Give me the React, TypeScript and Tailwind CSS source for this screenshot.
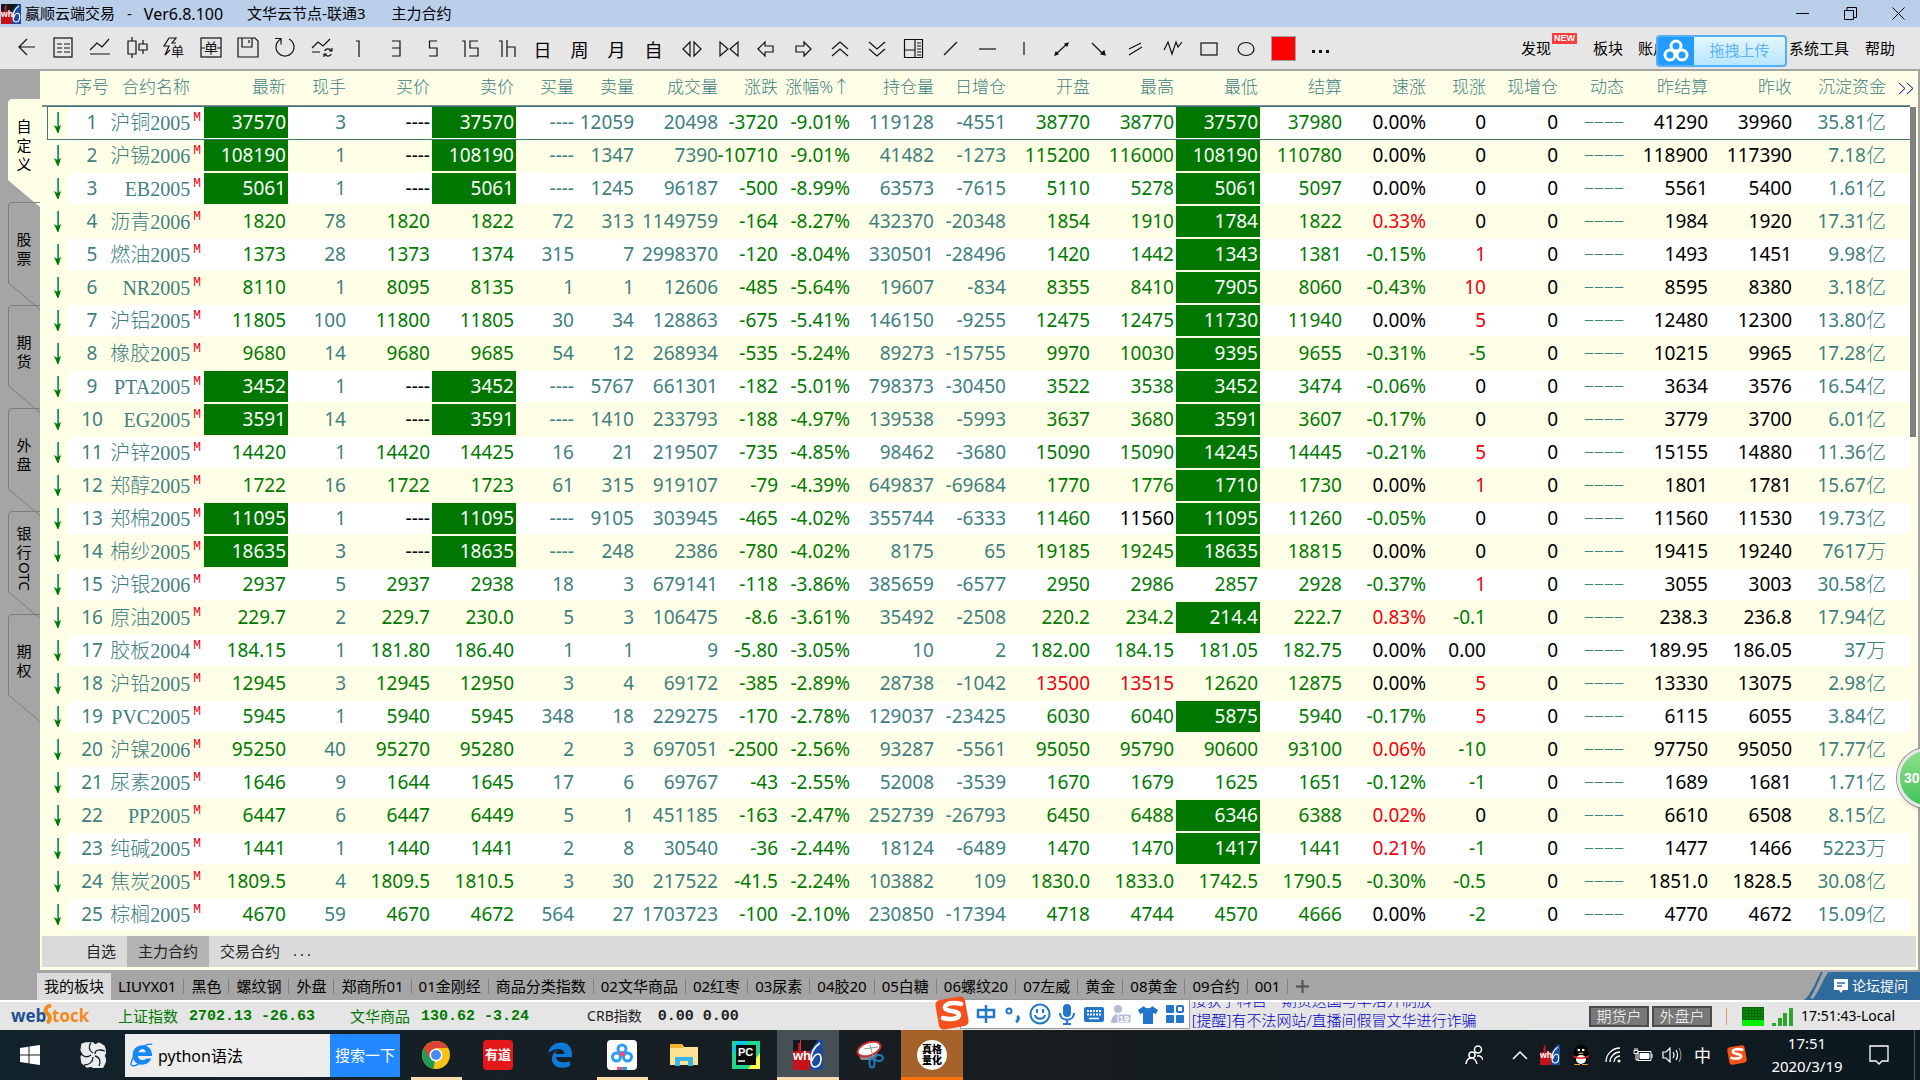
import React from "react";

type Row = {
  cells: string[];
  limit?: boolean;
  low?: boolean;
};

// name last vol bid ask bidVol askVol volume change pct oi dOi open high low settle speed tick prevSettle prevClose capital
const RAW = `
L沪铜2005 37570 3 ---- 37570 ---- 12059 20498 -3720 -9.01% 119128 -4551 38770 38770 37570 37980 0.00% 0 41290 39960 35.81亿
L沪锡2006 108190 1 ---- 108190 ---- 1347 7390 -10710 -9.01% 41482 -1273 115200 116000 108190 110780 0.00% 0 118900 117390 7.18亿
LEB2005 5061 1 ---- 5061 ---- 1245 96187 -500 -8.99% 63573 -7615 5110 5278 5061 5097 0.00% 0 5561 5400 1.61亿
*沥青2006 1820 78 1820 1822 72 313 1149759 -164 -8.27% 432370 -20348 1854 1910 1784 1822 0.33% 0 1984 1920 17.31亿
*燃油2005 1373 28 1373 1374 315 7 2998370 -120 -8.04% 330501 -28496 1420 1442 1343 1381 -0.15% 1 1493 1451 9.98亿
*NR2005 8110 1 8095 8135 1 1 12606 -485 -5.64% 19607 -834 8355 8410 7905 8060 -0.43% 10 8595 8380 3.18亿
*沪铝2005 11805 100 11800 11805 30 34 128863 -675 -5.41% 146150 -9255 12475 12475 11730 11940 0.00% 5 12480 12300 13.80亿
*橡胶2005 9680 14 9680 9685 54 12 268934 -535 -5.24% 89273 -15755 9970 10030 9395 9655 -0.31% -5 10215 9965 17.28亿
LPTA2005 3452 1 ---- 3452 ---- 5767 661301 -182 -5.01% 798373 -30450 3522 3538 3452 3474 -0.06% 0 3634 3576 16.54亿
LEG2005 3591 14 ---- 3591 ---- 1410 233793 -188 -4.97% 139538 -5993 3637 3680 3591 3607 -0.17% 0 3779 3700 6.01亿
*沪锌2005 14420 1 14420 14425 16 21 219507 -735 -4.85% 98462 -3680 15090 15090 14245 14445 -0.21% 5 15155 14880 11.36亿
*郑醇2005 1722 16 1722 1723 61 315 919107 -79 -4.39% 649837 -69684 1770 1776 1710 1730 0.00% 1 1801 1781 15.67亿
L郑棉2005 11095 1 ---- 11095 ---- 9105 303945 -465 -4.02% 355744 -6333 11460 11560 11095 11260 -0.05% 0 11560 11530 19.73亿
L棉纱2005 18635 3 ---- 18635 ---- 248 2386 -780 -4.02% 8175 65 19185 19245 18635 18815 0.00% 0 19415 19240 7617万
.沪银2006 2937 5 2937 2938 18 3 679141 -118 -3.86% 385659 -6577 2950 2986 2857 2928 -0.37% 1 3055 3003 30.58亿
*原油2005 229.7 2 229.7 230.0 5 3 106475 -8.6 -3.61% 35492 -2508 220.2 234.2 214.4 222.7 0.83% -0.1 238.3 236.8 17.94亿
.胶板2004 184.15 1 181.80 186.40 1 1 9 -5.80 -3.05% 10 2 182.00 184.15 181.05 182.75 0.00% 0.00 189.95 186.05 37万
.沪铅2005 12945 3 12945 12950 3 4 69172 -385 -2.89% 28738 -1042 13500 13515 12620 12875 0.00% 5 13330 13075 2.98亿
*PVC2005 5945 1 5940 5945 348 18 229275 -170 -2.78% 129037 -23425 6030 6040 5875 5940 -0.17% 5 6115 6055 3.84亿
.沪镍2006 95250 40 95270 95280 2 3 697051 -2500 -2.56% 93287 -5561 95050 95790 90600 93100 0.06% -10 97750 95050 17.77亿
.尿素2005 1646 9 1644 1645 17 6 69767 -43 -2.55% 52008 -3539 1670 1679 1625 1651 -0.12% -1 1689 1681 1.71亿
*PP2005 6447 6 6447 6449 5 1 451185 -163 -2.47% 252739 -26793 6450 6488 6346 6388 0.02% 0 6610 6508 8.15亿
*纯碱2005 1441 1 1440 1441 2 8 30540 -36 -2.44% 18124 -6489 1470 1470 1417 1441 0.21% -1 1477 1466 5223万
.焦炭2005 1809.5 4 1809.5 1810.5 3 30 217522 -41.5 -2.24% 103882 109 1830.0 1833.0 1742.5 1790.5 -0.30% -0.5 1851.0 1828.5 30.08亿
.棕榈2005 4670 59 4670 4672 564 27 1703723 -100 -2.10% 230850 -17394 4718 4744 4570 4666 0.00% -2 4770 4672 15.09亿
`;

// Leading mark of each line: L = limit down, * = new low of the day, . = neither
const ROWS: Row[] = RAW.trim()
  .split("\n")
  .map((line) => ({
    cells: line.slice(1).split(" "),
    limit: line[0] === "L",
    low: line[0] !== ".",
  }));

const TEAL = "text-[#408080]";
const GREEN = "text-[#007a00]";
const RED = "text-[#f00010]";
const FILL = "bg-[#007800] text-white";
const SONG = "font-['Liberation_Serif','Noto_Sans_CJK_SC',serif]";

function toneOf(value: string, base: number) {
  const n = parseFloat(value);
  if (Number.isNaN(n) || n === base) return "text-black";
  return n > base ? RED : GREEN;
}

function Num({ children, tone }: { children: React.ReactNode; tone: string }) {
  return (
    <td className={`border-b-2 border-[#ffffe8] p-0 ${tone}`}>
      <div className="flex h-[31px] items-center justify-end pr-0.5 leading-none whitespace-nowrap">{children}</div>
    </td>
  );
}

function QuoteRow({ row, index }: { row: Row; index: number }) {
  const c = row.cells;
  const prev = parseFloat(c[18]);
  const strong = row.limit ? FILL : GREEN;
  const capital = c[20];
  return (
    <tr className={index % 2 === 0 ? "bg-white" : "bg-[#ffffe8]"}>
      <td className="border-b-2 border-[#ffffe8] bg-[#ffffe8] p-0">
        <svg className="ml-3 block h-[21px] w-[7px]" viewBox="0 0 7 21" aria-hidden="true">
          <path d="M3 0h1v16H3z" fill="#2fb0b8" />
          <path d="M4 0h1v16H4z" fill="#2f8a3a" />
          <path d="M0 13l3.500 2L7 13 4.500 21h-1z" fill="#007a00" />
        </svg>
      </td>
      <td className={`border-b-2 border-[#ffffe8] p-0 text-center leading-none ${TEAL}`}>{index + 1}</td>
      <td className="border-b-2 border-[#ffffe8] p-0">
        <div className="flex h-[31px] justify-end gap-[3px] pr-[3px] leading-none whitespace-nowrap">
          <span className={`flex items-center text-[20px] font-light ${SONG} ${TEAL}`}>{c[0]}</span>
          <span className="pt-1 font-['Liberation_Mono',monospace] text-[13px] text-[#f00010]">M</span>
        </div>
      </td>
      <Num tone={strong}>{c[1]}</Num>
      <Num tone={TEAL}>{c[2]}</Num>
      <Num tone={row.limit ? "text-black" : GREEN}>{c[3]}</Num>
      <Num tone={strong}>{c[4]}</Num>
      <Num tone={TEAL}>{c[5]}</Num>
      <Num tone={TEAL}>{c[6]}</Num>
      <Num tone={TEAL}>{c[7]}</Num>
      <Num tone={GREEN}>{c[8]}</Num>
      <Num tone={GREEN}>{c[9]}</Num>
      <Num tone={TEAL}>{c[10]}</Num>
      <Num tone={TEAL}>{c[11]}</Num>
      <Num tone={toneOf(c[12], prev)}>{c[12]}</Num>
      <Num tone={toneOf(c[13], prev)}>{c[13]}</Num>
      <Num tone={row.low ? FILL : GREEN}>{c[14]}</Num>
      <Num tone={GREEN}>{c[15]}</Num>
      <Num tone={toneOf(c[16], 0)}>{c[16]}</Num>
      <Num tone={toneOf(c[17], 0)}>{c[17]}</Num>
      <Num tone="text-black">0</Num>
      <Num tone={TEAL}>
        <span className="pb-1 text-[20px] font-light">––––</span>
      </Num>
      <Num tone="text-black">{c[18]}</Num>
      <Num tone="text-black">{c[19]}</Num>
      <Num tone={TEAL}>
        {capital.slice(0, -1)}
        <span className="text-[20px] font-light">{capital.slice(-1)}</span>
      </Num>
      <td className="border-b-2 border-[#ffffe8] p-0" />
    </tr>
  );
}

const HEADERS = ["最新", "现手", "买价", "卖价", "买量", "卖量", "成交量", "涨跌", "涨幅%↑", "持仓量", "日增仓", "开盘", "最高", "最低", "结算", "速涨", "现涨", "现增仓", "动态", "昨结算", "昨收", "沉淀资金"];

function QuoteTable() {
  return (
    <table className="w-full table-fixed border-separate border-spacing-0 text-[19px]">
      <colgroup>
        <col className="w-[26px]" />
        <col className="w-[48px]" />
        <col className="w-[88px]" />
        <col className="w-[84px]" />
        <col className="w-[60px]" />
        <col className="w-[84px]" />
        <col className="w-[84px]" />
        <col className="w-[60px]" />
        <col className="w-[60px]" />
        <col className="w-[84px]" />
        <col className="w-[60px]" />
        <col className="w-[72px]" />
        <col className="w-[84px]" />
        <col className="w-[72px]" />
        <col className="w-[84px]" />
        <col className="w-[84px]" />
        <col className="w-[84px]" />
        <col className="w-[84px]" />
        <col className="w-[84px]" />
        <col className="w-[60px]" />
        <col className="w-[72px]" />
        <col className="w-[66px]" />
        <col className="w-[84px]" />
        <col className="w-[84px]" />
        <col className="w-[94px]" />
        <col className="w-[22px]" />
      </colgroup>
      <thead>
        <tr className={`text-[17px] leading-none whitespace-nowrap ${TEAL}`}>
          <th className="border-b-2 border-[#7c8c8c] p-0" />
          <th className="border-b-2 border-[#7c8c8c] p-0 pb-1 font-light">序号</th>
          <th className="border-b-2 border-[#7c8c8c] p-0 pr-3.5 pb-1 text-right font-light">合约名称</th>
          {HEADERS.map((h) => (
            <th key={h} className="border-b-2 border-[#7c8c8c] p-0 font-light">
              <div className="flex h-[34px] items-center justify-end pr-0.5 pb-1">{h}</div>
            </th>
          ))}
          <th className="border-b-2 border-[#7c8c8c] p-0">
            <button type="button" aria-label="更多列" className="block pl-2.5">
              <svg className="h-[13px] w-[16px]" viewBox="0 0 16 13" fill="none" stroke="#0000b0" aria-hidden="true">
                <path d="M1 1l6 5.500-6 5.500M9 1l6 5.500-6 5.500" />
              </svg>
            </button>
          </th>
        </tr>
      </thead>
      <tbody>
        {ROWS.map((r, i) => (
          <QuoteRow key={r.cells[0]} row={r} index={i} />
        ))}
      </tbody>
    </table>
  );
}

function Wh6({ className }: { className: string }) {
  return (
    <svg className={className} viewBox="0 0 30 30" preserveAspectRatio="none" aria-hidden="true">
      <rect width="30" height="30" fill="#15181c" />
      <path d="M0 11h5V3h3v8h9v19H0z" fill="#c5131b" />
      <path d="M17 11l8-11h5v30H17z" fill="#1a4ba0" />
      <path d="M7 0h1v10H7z" fill="#d33" />
      <text x="0" y="20" fontSize="13" fontWeight="bold" fill="#fff" fontFamily="Liberation Sans, sans-serif">wh</text>
      <path d="M27 3c-6 4-9 10-9 17 0 5 2 7 4 7 4 0 6-4 6-8 0-3-1-5-3-5s-5 3-6 7" fill="none" stroke="#fff" strokeWidth="1.600" />
    </svg>
  );
}

function TitleBar() {
  return (
    <header className="flex h-[27px] items-center bg-[#b9cfea] text-[15px] leading-none whitespace-nowrap">
      <Wh6 className="ml-px h-5 w-5" />
      <h1 className="ml-1 flex items-center">
        <span>赢顺云端交易</span>
        <span className="mx-3">-</span>
        <span className="text-[16px]">Ver6.8.100</span>
        <span className="ml-6">文华云节点-联通3</span>
        <span className="ml-[26px]">主力合约</span>
      </h1>
      <div className="ml-auto flex items-center">
        <button type="button" aria-label="最小化" className="flex w-11 justify-center">
          <svg className="size-[13px]" viewBox="0 0 13 13" stroke="#000"><path d="M0 6.500h13" /></svg>
        </button>
        <button type="button" aria-label="还原" className="flex w-[52px] justify-center">
          <svg className="size-[13px]" viewBox="0 0 13 13" fill="none" stroke="#000"><path d="M.5 3.500h9v9h-9zM3 3V.5h9.500v10H10" /></svg>
        </button>
        <button type="button" aria-label="关闭" className="flex w-11 justify-center">
          <svg className="size-[13px]" viewBox="0 0 13 13" fill="none" stroke="#000"><path d="M.5.5l12 12M12.500.5l-12 12" /></svg>
        </button>
      </div>
    </header>
  );
}

type Tool = { label: string; art?: React.ReactNode };

const glyph = (x: number, y: number, size: number, t: string) => (
  <text x={x} y={y} fontSize={size} fill="#111" stroke="none" fontFamily="Noto Sans CJK SC, sans-serif">{t}</text>
);

const TOOLS: Tool[] = [
  { label: "后退", art: <path d="M20 10H4M12 2l-8 8 8 8" /> },
  { label: "报价", art: <><rect x="2" y="1" width="18" height="19" /><path d="M5 7h5M12 7h6M5 11h5M12 11h6M5 15h5M12 15h6" /></> },
  { label: "分时", art: <path d="M1 13l7-7 5 4 7-8M1 17h20" /> },
  { label: "K线", art: <path d="M2 4h8v13H2zM6 0v4M6 17v4M13 7h8v6h-8zM17 3v4M17 13v4" /> },
  { label: "闪电下单", art: <><path d="M6 1L1 9h5l-4 9 5-5M6 1h7L9 6h4" />{glyph(8, 19, 13, "单")}</> },
  { label: "下单", art: <><rect x="1" y="1" width="20" height="19" />{glyph(4, 16, 14, "单")}<path d="M1 11h4M17 11h4" /></> },
  { label: "保存", art: <path d="M1 1h17l3 3v16H1zM5 1v9h10V1M12 3v3" /> },
  { label: "刷新", art: <path d="M15 2a9 9 0 1 1-8 0M1 1.500h6v6" /> },
  { label: "切换周期", art: <><path d="M1 11l6-6 5 4 7-7M1 15h8" /><path d="M21 11v3h-3M13 20v-3h3M13.500 14a4 4 0 0 1 7 0M20.500 17a4 4 0 0 1-7 0" /></> },
  { label: "1", art: <path d="M8 4h3v16" /> },
  { label: "3", art: <path d="M7 4h8v15H7M7 11h8" /> },
  { label: "5", art: <path d="M15 4H7.500v7H15v8H7" /> },
  { label: "15", art: <path d="M3 4h3v16M19 4h-8v7h8v8h-9" /> },
  { label: "1h", art: <path d="M3 4h3v16M11 3v17M11 10h8v10" /> },
  { label: "日" },
  { label: "周" },
  { label: "月" },
  { label: "自" },
  { label: "缩小", art: <path d="M9 5v14l-7-7zM13 5v14l7-7z" /> },
  { label: "放大", art: <path d="M2 5v14l8-7zM20 5v14l-8-7z" /> },
  { label: "左移", art: <path d="M3 12l7-7v4h8v6h-8v4z" /> },
  { label: "右移", art: <path d="M19 12l-7-7v4H4v6h8v4z" /> },
  { label: "上翻", art: <path d="M3 12l8-7 8 7M3 19l8-7 8 7" /> },
  { label: "下翻", art: <path d="M3 5l8 7 8-7M3 12l8 7 8-7" /> },
  { label: "分割窗口", art: <path d="M1.500 2.500h18v18h-18zM12 2v18M2 13h10M14 6h4M14 9h4M14 12h4M14 15h4M14 18h4" /> },
  { label: "直线", art: <path d="M4 18L17 5" /> },
  { label: "水平线", art: <path d="M2 12h17" /> },
  { label: "垂直线", art: <path d="M10 5v13" /> },
  { label: "双向箭头", art: <><path d="M5 17L16 7" /><path d="M17 6l-3 1 2 2zM4 18l1-3 2 2z" fill="#111" /></> },
  { label: "箭头", art: <><path d="M4 6l11 11" /><path d="M17 18l-4-1 3-3z" fill="#111" /></> },
  { label: "平行线", art: <path d="M4 12L16 6M4 18l13-8" /> },
  { label: "折线", art: <path d="M2 13l4-8 4 12 4-12 2 5 4-5" /> },
  { label: "矩形", art: <rect x="2" y="6" width="16" height="12" /> },
  { label: "椭圆", art: <ellipse cx="10" cy="12" rx="8" ry="6.500" /> },
];

const MENU = "text-[15px] leading-none whitespace-nowrap";

function Toolbar() {
  return (
    <nav className="flex h-11 items-center border-b-2 border-[#a5a5a5] bg-[#e6e6e6] pl-[7px]">
      {TOOLS.map((t) => (
        <button key={t.label} type="button" title={t.label} className="flex h-full w-[37px] shrink-0 items-center justify-center text-[18px] leading-none">
          {t.art ? (
            <svg className="size-[22px] overflow-visible" viewBox="0 0 22 22" fill="none" stroke="#111" strokeWidth="1.200" aria-hidden="true">{t.art}</svg>
          ) : (
            <span className="pt-1 pr-0.5">{t.label}</span>
          )}
        </button>
      ))}
      <button type="button" title="颜色" className="flex w-[37px] shrink-0 justify-center">
        <span className="size-[25px] border border-[#a0a0a0] bg-[#ff0000]" />
      </button>
      <button type="button" title="更多" className="flex w-[37px] shrink-0 justify-center gap-1 pt-1.5">
        <span className="size-[3px] bg-[#111]" />
        <span className="size-[3px] bg-[#111]" />
        <span className="size-[3px] bg-[#111]" />
      </button>
      <div className="ml-auto flex h-full items-center pr-[25px]">
        <button type="button" className={`relative ${MENU}`}>
          发现
          <span className="absolute -top-2 left-[31px] bg-[#ff3b3b] px-0.5 font-['Liberation_Sans',sans-serif] text-[9px] leading-[11px] font-bold text-white">NEW</span>
        </button>
        <button type="button" className={`ml-[42px] ${MENU}`}>板块</button>
        <button type="button" className={`relative ml-[15px] w-[151px] text-left ${MENU}`}>
          账户
          <span className="absolute -top-1.5 left-[18px] flex h-8 w-[131px] items-center overflow-hidden rounded border-2 border-[#55aff5] bg-linear-to-b from-[#e4f6ff] to-[#b8e6ff]">
            <span className="flex h-full w-9 items-center justify-center bg-[#229cff]">
              <svg className="h-6 w-[26px]" viewBox="0 0 26 24" fill="none" stroke="#fff" strokeWidth="3" aria-hidden="true">
                <circle cx="13" cy="7" r="5" /><circle cx="7" cy="16" r="5" /><circle cx="19" cy="16" r="5" />
              </svg>
            </span>
            <span className="flex-1 text-center text-[#5cb4f6]">拖拽上传</span>
          </span>
        </button>
        <button type="button" className={MENU}>系统工具</button>
        <button type="button" className={`ml-4 ${MENU}`}>帮助</button>
      </div>
    </nav>
  );
}

const SIDE = [["自", "定", "义"], ["股", "票"], ["期", "货"], ["外", "盘"], ["银", "行", "OTC"], ["期", "权"]];

function Sidebar() {
  return (
    <aside className="flex w-10 shrink-0 flex-col bg-[#a5a5a5] pt-7 pl-2">
      {SIDE.map((chars, i) => (
        <button key={i} type="button" className="relative flex h-[103px] w-8 flex-col items-center justify-center pb-2.5 text-[15px] leading-[19px]">
          <svg className="absolute top-0 left-0 h-[108px] w-8" viewBox="0 0 32 108" fill={i === 0 ? "#ffffe8" : "none"} stroke={i === 0 ? "#ffffe8" : "#7c7c7c"} aria-hidden="true">
            <path d="M32 .5H4Q.5.5.5 4v77L32 107.500" />
          </svg>
          {chars.map((ch) => (
            <span key={ch} className={ch.length > 1 ? "relative leading-none [writing-mode:vertical-rl]" : "relative"}>{ch}</span>
          ))}
        </button>
      ))}
    </aside>
  );
}

function QuotePanel() {
  return (
    <section className="relative min-w-0 flex-1 border-r-2 border-[#a5a5a5] bg-[#ffffe8] pb-[3px] pl-0.5">
      <div className="flex">
        <div className="relative min-w-0 flex-1">
          <QuoteTable />
          <div className="pointer-events-none absolute top-[35px] right-0 left-[5px] h-[34px] border border-r-0 border-[#3a7878]" />
        </div>
        <div className="w-1.5 pt-9">
          <div className="h-[330px] bg-[#808080]" />
        </div>
        <div className="w-0.5" />
      </div>
      <div className="mt-1 mr-0.5 flex h-[31px] items-center bg-[#dadada] text-[15px] leading-none whitespace-nowrap text-[#222]">
        <button type="button" className="h-full pr-[11px] pl-11">自选</button>
        <button type="button" className="h-full bg-[#b4b4b4] px-[11px]">主力合约</button>
        <button type="button" className="h-full pr-3.5 pl-[11px]">交易合约</button>
        <button type="button" aria-label="更多" className="flex gap-[5px] pt-1.5">
          <span className="size-0.5 bg-[#555]" />
          <span className="size-0.5 bg-[#555]" />
          <span className="size-0.5 bg-[#555]" />
        </button>
      </div>
    </section>
  );
}

const BOARDS = ["LIUYX01", "黑色", "螺纹钢", "外盘", "郑商所01", "01金刚经", "商品分类指数", "02文华商品", "02红枣", "03尿素", "04胶20", "05白糖", "06螺纹20", "07左威", "黄金", "08黄金", "09合约", "001"];

function BoardTabs() {
  return (
    <nav className="flex h-[30px] items-end bg-[#a5a5a5] pl-[37px] text-[15px] leading-none whitespace-nowrap">
      <button type="button" className="h-[27px] bg-[#dcdcdc] px-[7px]">我的板块</button>
      {BOARDS.map((b) => (
        <button key={b} type="button" className="flex h-[27px] items-center">
          <span className="px-[7px]">{b}</span>
          <span className="h-[15px] w-px bg-[#808080]" />
        </button>
      ))}
      <button type="button" aria-label="添加" className="flex h-[27px] items-center pl-2">
        <svg className="size-[13px]" viewBox="0 0 13 13" stroke="#505050" strokeWidth="2"><path d="M0 6.500h13M6.500 0v13" /></svg>
      </button>
      <button type="button" className="relative ml-auto flex h-7 w-[116px] items-center justify-end gap-1 pr-3 text-[14px] text-white">
        <svg className="absolute inset-0 h-full w-full" viewBox="0 0 116 28" preserveAspectRatio="none" aria-hidden="true">
          <path d="M0 28C8 24 12 0 28 0h88v28z" fill="#2f6a9c" />
          <path d="M7 26C14 18 16 8 22 0" fill="none" stroke="#a5a5a5" strokeWidth="4" />
          <path d="M4 27C11 18 13 8 18 0" fill="none" stroke="#2f6a9c" strokeWidth="2" />
        </svg>
        <svg className="relative size-[14px]" viewBox="0 0 14 14" aria-hidden="true">
          <path d="M0 0h14v11H9l-2 3-2-3H0z" fill="#fff" />
          <path d="M3 4h8M3 7h5" stroke="#2f6a9c" strokeWidth="1.500" />
        </svg>
        <span className="relative">论坛提问</span>
      </button>
    </nav>
  );
}

function SogouLogo({ className }: { className: string }) {
  return (
    <svg className={className} viewBox="0 0 36 34" aria-hidden="true">
      <rect x="3" y="2" width="30" height="30" rx="5" fill="#f4511e" transform="rotate(-10 18 17)" />
      <path d="M27 8c-7-2-15-1-16 3-1 5 14 3 14 8 0 4-9 5-16 3" fill="none" stroke="#fff" strokeWidth="4.500" strokeLinecap="round" />
    </svg>
  );
}

const IME = "size-[22px]";

function ImeBar() {
  return (
    <div className="relative -mt-1 flex h-[30px] w-[230px] items-center justify-end border border-[#999] bg-white pr-[3px]">
      <SogouLogo className="absolute -top-1 -left-[27px] h-[34px] w-9" />
      <div className="flex gap-[5px]">
        <svg className={IME} viewBox="0 0 22 22" fill="none" stroke="#2277cc" strokeWidth="2.500"><path d="M3 7h16v7H3zM11 2v18" /></svg>
        <svg className={IME} viewBox="0 0 22 22" fill="none" stroke="#2277cc" strokeWidth="2"><circle cx="7" cy="8" r="2.500" /><path d="M15 13c2 1 2 4-1 6" strokeWidth="3" /></svg>
        <svg className={IME} viewBox="0 0 22 22" fill="none" stroke="#2277cc" strokeWidth="2"><circle cx="11" cy="11" r="9.500" /><path d="M6 12c1 5 9 5 10 0M8 6v4M14 6v4" /></svg>
        <svg className={IME} viewBox="0 0 22 22" fill="none" stroke="#2277cc" strokeWidth="2"><rect x="8" y="2" width="6" height="11" rx="3" fill="#2277cc" /><path d="M4 10c0 9 14 9 14 0M11 17v4M7 21h8" /></svg>
        <svg className={IME} viewBox="0 0 22 22"><rect x="1" y="4" width="20" height="15" rx="2" fill="#2277cc" /><path d="M4 8h14M4 11.500h14" stroke="#fff" strokeWidth="2" strokeDasharray="2 1" /><path d="M6 15.500h10" stroke="#fff" strokeWidth="1.500" /></svg>
        <svg className={IME} viewBox="0 0 22 22"><circle cx="8" cy="6" r="4" fill="#b3bdd6" /><path d="M1 20c0-12 14-12 14 0z" fill="#b3bdd6" /><rect x="8" y="11" width="13" height="9" fill="#b3bdd6" stroke="#fff" /><text x="9" y="19" fontSize="9" fontWeight="bold" fill="#fff" fontFamily="Liberation Sans, sans-serif">19</text></svg>
        <svg className={IME} viewBox="0 0 22 22"><path d="M7 3c1 3 7 3 8 0l6 4-2 4-3-1v11H6V10l-3 1-2-4z" fill="#2277cc" /></svg>
        <svg className={IME} viewBox="0 0 22 22" fill="#2277cc"><rect x="2" y="2" width="8" height="8" rx="1" /><rect x="13" y="3" width="6" height="6" rx="1" fill="none" stroke="#2277cc" strokeWidth="2" /><rect x="2" y="12" width="8" height="8" rx="1" /><rect x="12" y="12" width="8" height="8" rx="1" /></svg>
      </div>
    </div>
  );
}

function StatusBar() {
  return (
    <footer className="flex h-[30px] items-center border-t-2 border-white bg-[#e5e5e5] text-[15px] leading-none whitespace-nowrap">
      <svg className="ml-2 h-6 w-[86px]" viewBox="0 0 86 24" aria-label="webStock">
        <g fontFamily="Open Sans, sans-serif" fontWeight="bold" fontSize="17">
          <text x="3" y="18" fill="#1d4f91">web</text>
          <text x="44" y="18" fill="#f58a1f">tock</text>
        </g>
        <path d="M43 1c-6 2-7 6-3 9 3 3 2 7-1 9" fill="none" stroke="#f58a1f" strokeWidth="4" />
      </svg>
      <span className="ml-6 text-[#007a00]">上证指数</span>
      <span className="ml-[11px] font-['Liberation_Mono',monospace] font-bold text-[#007a00]">2702.13 -26.63</span>
      <span className="ml-[35px] text-[#007a00]">文华商品</span>
      <span className="ml-[11px] font-['Liberation_Mono',monospace] font-bold text-[#007a00]">130.62 -3.24</span>
      <span className="ml-[58px] text-[14px] text-[#222]">CRB指数</span>
      <span className="ml-4 font-['Liberation_Mono',monospace] font-bold text-[#222]">0.00 0.00</span>
      <div className="ml-[221px]"><ImeBar /></div>
      <a href="#notice" className="ml-0.5 flex h-7 w-[300px] flex-col justify-end overflow-hidden font-light text-[#0000c0]">
        <span className="leading-[22px]">接获手科自一期货送国与早洛开制放</span>
        <span className="leading-[19px]">[提醒]有不法网站/直播间假冒文华进行诈骗</span>
      </a>
      <div className="ml-auto flex items-center pr-[25px]">
        <button type="button" className="h-[21px] w-[60px] border-2 border-[#4c4c4c] bg-[#777] text-[15px] leading-none font-light text-white">期货户</button>
        <button type="button" className="ml-[3px] h-[21px] w-[60px] border-2 border-[#4c4c4c] bg-[#777] text-[15px] leading-none font-light text-white">外盘户</button>
        <span className="ml-3.5 h-[17px] w-px bg-[#e89080]" />
        <svg className="ml-[15px] h-[19px] w-[22px]" viewBox="0 0 22 19" aria-hidden="true">
          <rect width="22" height="19" fill="#005000" />
          <path d="M2 0v13M5 0v13M8 0v13M11 0v13M14 0v13M17 0v13M20 0v13M0 2h22M0 5h22M0 8h22M0 11h22" stroke="#0c9a0c" />
          <rect y="13" width="22" height="6" fill="#00f000" />
        </svg>
        <svg className="ml-2 h-[19px] w-[21px]" viewBox="0 0 21 19" fill="#2ba52b" aria-hidden="true">
          <path d="M0 16h4v3H0zM6 11h4v8H6zM11 6h4v13h-4zM17 1h4v18h-4z" />
        </svg>
        <span className="ml-2 text-[14px] text-black">17:51:43-Local</span>
      </div>
    </footer>
  );
}

type App = { label: string; art: React.ReactNode; state?: "open" | "active" | "alert" };

const APPS: App[] = [
  {
    label: "Chrome",
    state: "open",
    art: (
      <svg className="size-7" viewBox="0 0 28 28">
        <circle cx="14" cy="14" r="14" fill="#fbc116" />
        <path d="M14 14L1.900 7a14 14 0 0 0 9.500 20.700z" fill="#1e9c56" />
        <path d="M14 7h12.100A14 14 0 0 0 1.900 7l6 10.500z" fill="#dc4437" />
        <circle cx="14" cy="14" r="6.500" fill="#fff" /><circle cx="14" cy="14" r="5" fill="#4a8af4" />
      </svg>
    ),
  },
  { label: "有道", art: <span className="flex size-[30px] items-center justify-center rounded bg-[#e4191a] text-[13px] leading-none font-bold text-white">有道</span> },
  {
    label: "Edge",
    art: (
      <svg className="size-[26px]" viewBox="0 0 26 26">
        <path d="M1 12C2 5 7 .5 14 .5c8 0 11 6 11 11.500V15H9c0 5 8 7 14 4v5c-9 4-18 1-18-7 0-5 3-8 6-9-2 1-2.500 3-2.500 4h9c0-6-10-7-17.500 0z" fill="#0d7ad8" />
      </svg>
    ),
  },
  {
    label: "百度网盘",
    state: "open",
    art: (
      <svg className="size-[30px]" viewBox="0 0 30 30" fill="none" strokeWidth="3">
        <rect width="30" height="30" rx="4" fill="#fff" />
        <circle cx="15" cy="9" r="4" stroke="#2a9df4" /><circle cx="9.500" cy="17" r="4" stroke="#2a9df4" /><circle cx="20.500" cy="17" r="4" stroke="#2a9df4" />
        <circle cx="15" cy="14" r="2.500" fill="#f0506e" /><path d="M10 28.500h5" stroke="#f0506e" /><path d="M15 28.500h5" stroke="#2a9df4" />
      </svg>
    ),
  },
  {
    label: "文件资源管理器",
    art: (
      <svg className="h-6 w-7" viewBox="0 0 28 24">
        <path d="M0 1h12l2 3h14v18H0z" fill="#ffe394" /><path d="M0 1h12l1 4H0z" fill="#f0b429" />
        <path d="M5 23V14h18v9h-5v-5h-8v5z" fill="#3bb4e8" />
      </svg>
    ),
  },
  {
    label: "PyCharm",
    art: (
      <svg className="size-7" viewBox="0 0 28 28">
        <path d="M0 0h28v16L20 28H0z" fill="#21d789" /><path d="M0 8l6-8h10L4 14z" fill="#07c3f2" /><path d="M28 12v16H16z" fill="#fcf84a" />
        <rect x="4" y="4" width="20" height="20" fill="#0a0a0a" />
        <text x="6" y="15" fontSize="11" fontWeight="bold" fill="#fff" fontFamily="Liberation Sans, sans-serif">PC</text><path d="M6 20h7" stroke="#fff" strokeWidth="1.500" />
      </svg>
    ),
  },
  { label: "赢顺云端交易", state: "active", art: <Wh6 className="size-[30px]" /> },
  {
    label: "截图工具",
    art: (
      <svg className="size-7" viewBox="0 0 28 28" fill="none">
        <path d="M2 13L22 12 17 19H5z" fill="#888" />
        <ellipse cx="13" cy="8" rx="12" ry="6.500" transform="rotate(-20 13 8)" fill="#fff" stroke="#c92a2a" strokeWidth="2" /><path d="M8 8l14-2M14 4l3 11" stroke="#999" />
        <ellipse cx="23" cy="17" rx="4" ry="3" stroke="#1b7fc4" strokeWidth="2" /><ellipse cx="16" cy="22" rx="2.500" ry="4.500" stroke="#1b7fc4" strokeWidth="2" />
      </svg>
    ),
  },
  {
    label: "真格量化",
    state: "alert",
    art: (
      <span className="flex size-[30px] flex-col items-center justify-center rounded-full bg-white text-[10px] leading-[11px] font-black text-black">
        <span>真格</span>
        <span>量化</span>
      </span>
    ),
  },
];

function Taskbar() {
  return (
    <nav className="flex h-[50px] items-center bg-linear-to-r from-[#12222b] via-[#181d20] to-[#0c1920] text-[15px] leading-none whitespace-nowrap text-white">
      <button type="button" aria-label="开始" className="ml-5">
        <svg className="size-5" viewBox="0 0 20 20" fill="#fff"><path d="M0 3l8.500-1.200v7.700H0zM9.500 1.600L20 0v9.500H9.500zM0 10.500h8.500v7.700L0 17zM9.500 10.500H20V20L9.500 18.400z" /></svg>
      </button>
      <button type="button" aria-label="助手" className="ml-10">
        <svg className="size-[26px]" viewBox="0 0 26 26" fill="none" stroke="#14222a" strokeWidth="1.300">
          <path d="M5 1h8l2 2 4-2 5 3 2 6-2 4 2 4-3 7-9 1-3-2-4 1-5-4-1-6 2-3-2-4 1-6z" fill="#e9ecec" stroke="#e9ecec" strokeLinejoin="round" />
          <path d="M13 11C9 9 8 4 11 1M15 12c0-4 4-5 10-3M15 14c5 1 6 6 4 10M13 15c0 5-4 8-9 8M11 13C7 16 3 15 1 11" />
        </svg>
      </button>
      <form className="ml-[19px] flex h-[43px] w-[275px]" onSubmit={(e) => e.preventDefault()}>
        <label className="flex min-w-0 flex-1 items-center bg-[#ededed] pl-[5px]">
          <svg className="h-6 w-[23px] shrink-0" viewBox="0 0 26 26" aria-hidden="true">
            <path d="M3 13C3 6 8 2 14 2c8 0 11 6 11 12H9c0 5 8 6 9 3h6c-2 5-6 7-11 7-6 0-10-5-10-11zm6-3h9c-1-5-8-5-9 0z" fill="#1687f5" />
            <path d="M25 1C17-1 2 12 1 24c3 3 7 0 9-1" fill="none" stroke="#1687f5" strokeWidth="1.500" />
          </svg>
          <span className="sr-only">搜索</span>
          <input type="text" defaultValue="python语法" className="ml-[5px] w-full min-w-0 bg-transparent text-[16px] text-black outline-none" />
        </label>
        <button type="submit" className="w-[70px] bg-[#2188ff]">搜索一下</button>
      </form>
      <div className="ml-[5px] flex h-full">
        {APPS.map((a) => (
          <button
            key={a.label}
            type="button"
            aria-label={a.label}
            className={`flex h-full w-[62px] flex-col items-center justify-end ${a.state === "active" ? "bg-[#475054]" : a.state === "alert" ? "bg-[#a5622a]" : ""}`}
          >
            <span className="flex flex-1 items-center pt-0.5">{a.art}</span>
            <span className={`h-[3px] ${a.state === "open" ? "w-[51px] bg-[#ffdcb0]" : a.state === "active" ? "w-full bg-[#ffdcb0]" : a.state === "alert" ? "w-full bg-[#ff7400]" : "w-full"}`} />
          </button>
        ))}
      </div>
      <div className="ml-auto flex h-full items-center pr-[5px]">
        <svg className="size-5" viewBox="0 0 20 20" fill="none" stroke="#fff" strokeWidth="1.500"><circle cx="15" cy="4.500" r="3.500" /><circle cx="9" cy="10" r="3" /><path d="M3 19c1-8 9-8 11 0M14 11c3-1 5 1 6 4" /></svg>
        <svg className="ml-[29px] h-[9px] w-4" viewBox="0 0 16 9" fill="none" stroke="#fff" strokeWidth="1.500"><path d="M1 8l7-7 7 7" /></svg>
        <Wh6 className="ml-3 size-5" />
        <svg className="ml-[11px] size-[20px]" viewBox="0 0 18 18"><ellipse cx="9" cy="9" rx="7" ry="9" fill="#000" /><ellipse cx="9" cy="13" rx="4.500" ry="4" fill="#fff" /><circle cx="7" cy="4.500" r="1.200" fill="#fff" /><circle cx="11" cy="4.500" r="1.200" fill="#fff" /><path d="M2 9c4 3 10 3 14 0v2c-4 2-10 2-14 0z" fill="#e02020" /><path d="M3 17h5v1H3zM10 17h5v1h-5zM7 7h4v1H7z" fill="#f5a623" /></svg>
        <svg className="ml-3.5 size-4" viewBox="0 0 16 16" fill="none" stroke="#fff" strokeWidth="1.300"><path d="M1 15A14 14 0 0 1 15 1M5 15A10 10 0 0 1 15 5M9 15a6 6 0 0 1 6-6" /><circle cx="14" cy="14" r="1.500" fill="#fff" stroke="none" /></svg>
        <svg className="ml-3 h-4 w-5" viewBox="0 0 20 16" fill="none" stroke="#fff"><path d="M5 4.500h13v9H5zM19 7v4" /><path d="M7 6.500h9v5H7z" fill="#fff" /><path d="M1 3.500h4v3H1zM2 1v2M4 1v2M3 7v6h3" /></svg>
        <svg className="ml-[9px] h-4 w-5" viewBox="0 0 20 16" fill="none" stroke="#fff" strokeWidth="1.200"><path d="M1 5h3l4-4v14l-4-4H1zM11 5q2 3 0 6M14 3q3 5 0 10" /><path d="M17 1q4 7 0 14" stroke="#888" /></svg>
        <span className="ml-3 text-[17px]">中</span>
        <SogouLogo className="ml-[15px] h-5 w-[22px]" />
        <div className="ml-[21px] flex w-[76px] flex-col items-center leading-[23px]">
          <time>17:51</time>
          <time>2020/3/19</time>
        </div>
        <svg className="ml-6 h-[21px] w-5" viewBox="0 0 20 21" fill="none" stroke="#fff" strokeWidth="1.300"><path d="M1 1h18v15h-6l-3 3-3-3H1z" /></svg>
        <span className="ml-[25px] h-full w-px bg-[#4c565c]" />
      </div>
    </nav>
  );
}

export default function App() {
  return (
    <div className="relative flex min-h-screen flex-col overflow-x-hidden bg-[#a5a5a5] font-['Noto_Sans','Noto_Sans_CJK_SC',sans-serif] text-black">
      <TitleBar />
      <Toolbar />
      <main className="flex flex-1">
        <Sidebar />
        <QuotePanel />
      </main>
      <BoardTabs />
      <StatusBar />
      <Taskbar />
      <button
        type="button"
        aria-label="加速球"
        className="absolute top-[748px] -right-[37px] flex size-[60px] items-center rounded-full border-[3px] border-[#e8e8e8] bg-linear-to-b from-[#8ce08c] to-[#3fc45c] pl-1 font-['Liberation_Sans',sans-serif] text-[14px] font-bold text-white shadow-md ring-1 ring-[#888]"
      >
        30
      </button>
    </div>
  );
}
